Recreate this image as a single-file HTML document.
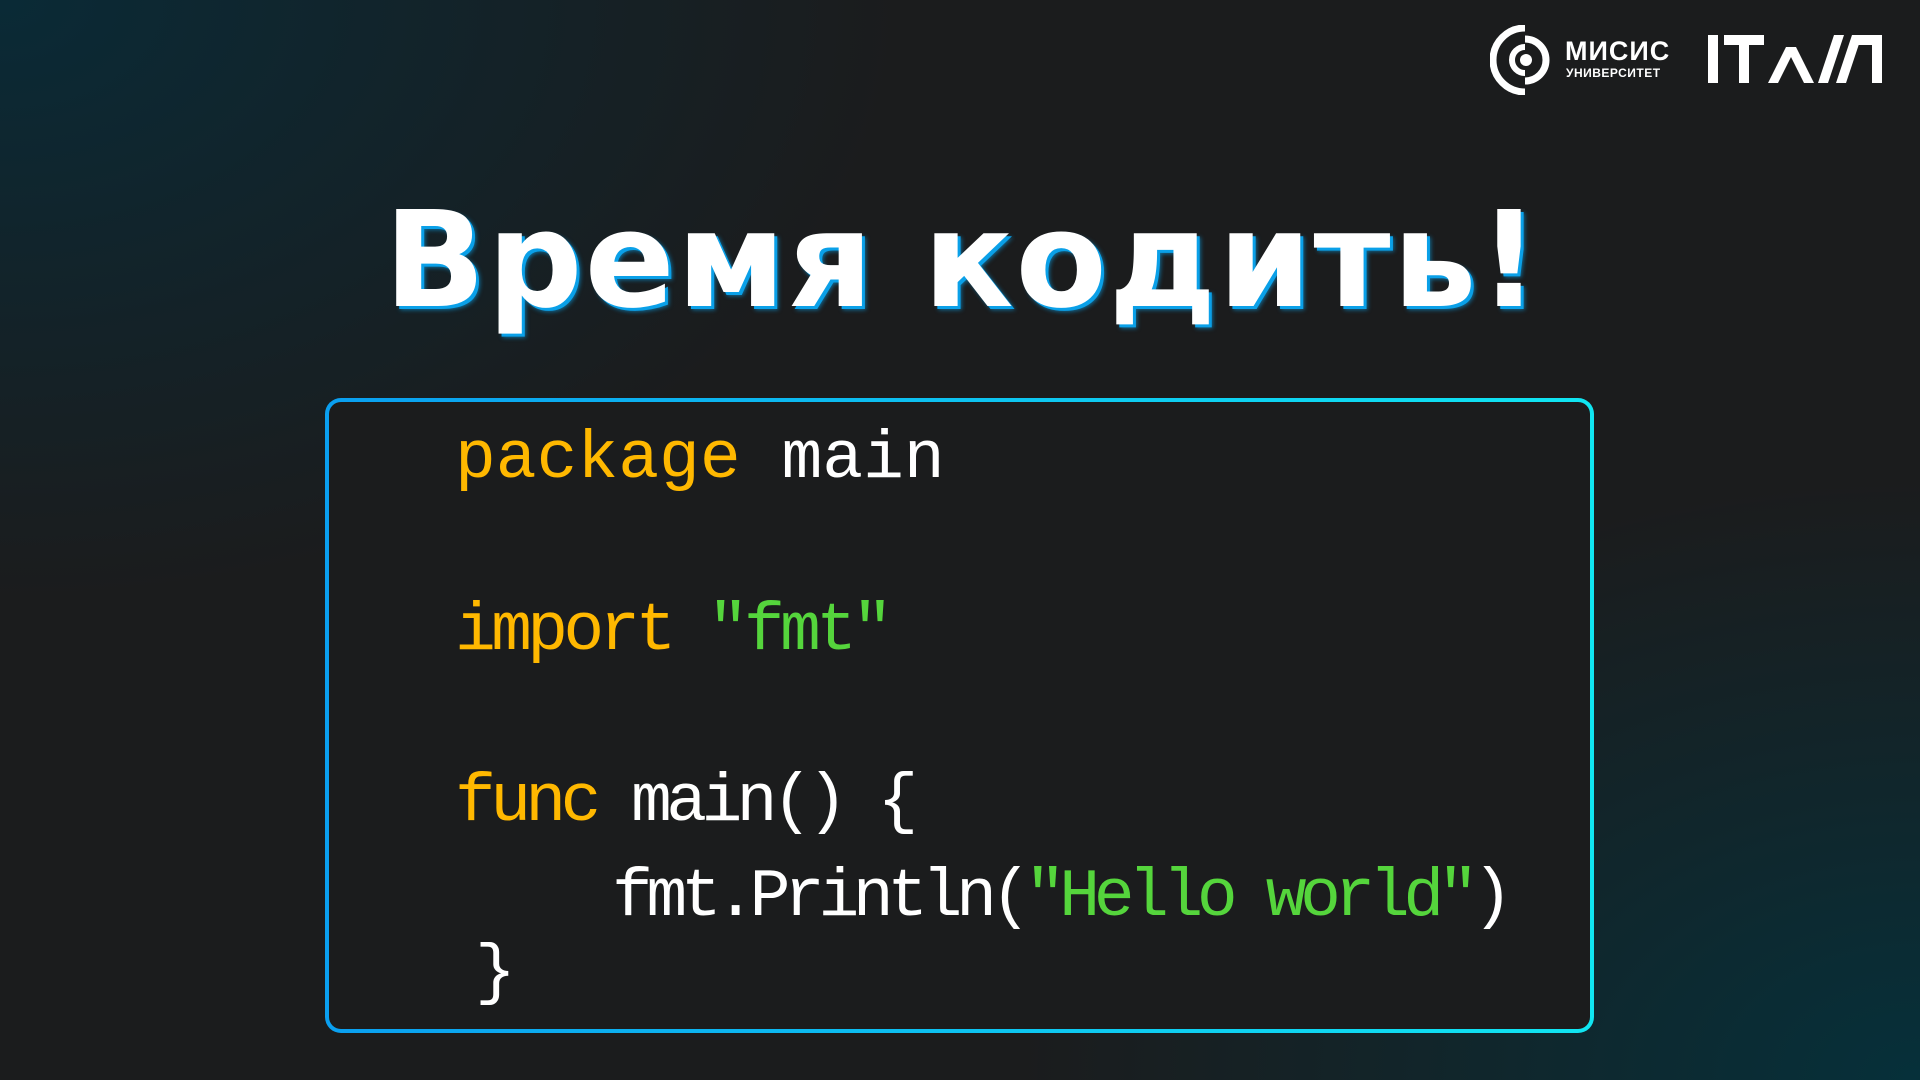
<!DOCTYPE html>
<html><head><meta charset="utf-8"><style>
html,body{margin:0;padding:0}
body{width:1920px;height:1080px;overflow:hidden;position:relative;
background:radial-gradient(ellipse 900px 600px at 0% 0%,#0a2a36 0%,rgba(10,42,54,0) 100%),radial-gradient(ellipse 900px 600px at 100% 100%,#06303a 0%,rgba(6,48,58,0) 100%),#1b1c1d;
font-family:"Liberation Sans",sans-serif}
.title{position:absolute;left:384px;top:195px;width:1150px;font-family:"DejaVu Sans","Liberation Sans",sans-serif;font-weight:bold;font-size:133px;color:#fff;white-space:nowrap;letter-spacing:2px;
text-shadow:3px 3px 0 #0aa0e8,4px 4px 4px rgba(10,160,232,.6);line-height:1}
.box{position:absolute;left:325px;top:398px;width:1269px;height:635px;border-radius:16px;padding:4px;box-sizing:border-box;background:linear-gradient(90deg,#0a9ff0,#10e6f2)}
.inner{width:100%;height:100%;border-radius:12px;background:#1b1c1d}
.code{position:absolute;font-family:"Liberation Mono",monospace;font-size:68px;color:#fff;white-space:pre;line-height:1}
.y{color:#ffb800}.g{color:#55d53c}
</style></head><body>
<div class="title">Время кодить!</div>
<div class="box"><div class="inner"></div></div>
<div class="code" style="left:455px;top:426px"><span class="y">package</span> main</div>
<div class="code" style="left:455px;top:598px;letter-spacing:-4.7px"><span class="y">import</span> <span class="g">"fmt"</span></div>
<div class="code" style="left:455px;top:769px;letter-spacing:-5.6px"><span class="y">func</span> main() {</div>
<div class="code" style="left:612px;top:864px;letter-spacing:-6.4px">fmt.Println(<span class="g">"Hello world"</span>)</div>
<div class="code" style="left:475px;top:940px">}</div>
<svg style="position:absolute;left:1490px;top:25px" width="80" height="70" viewBox="0 0 80 70">
<path d="M35 3 A32 32 0 1 0 35 67" fill="none" stroke="#fff" stroke-width="7"/>
<path d="M35 14 A21 21 0 1 1 35 56" fill="none" stroke="#fff" stroke-width="7"/>
<path d="M35 22 A13 13 0 1 0 35 48" fill="none" stroke="#fff" stroke-width="6"/>
<circle cx="36" cy="35" r="6" fill="#fff"/>
</svg>
<div style="position:absolute;left:1565px;top:38px;color:#fff;font-weight:bold;font-size:27px;line-height:1;letter-spacing:1px">МИСИС</div>
<div style="position:absolute;left:1566px;top:67px;color:#fff;font-weight:bold;font-size:12px;line-height:1;letter-spacing:.5px">УНИВЕРСИТЕТ</div>
<svg style="position:absolute;left:1706px;top:33px" width="180" height="52" viewBox="0 0 180 52">
<rect x="2" y="2" width="10" height="48" fill="#fff"/>
<rect x="18" y="2" width="40" height="10" fill="#fff"/>
<rect x="33" y="2" width="10" height="48" fill="#fff"/>
<polygon points="62,50 80,14 90,14 108,50 98,50 85,24 72,50" fill="#fff"/>
<polygon points="112,50 128,2 138,2 122,50" fill="#fff"/>
<polygon points="130,50 146,2 156,2 140,50" fill="#fff"/>
<rect x="166" y="2" width="10" height="48" fill="#fff"/>
<rect x="146" y="2" width="30" height="10" fill="#fff"/>
</svg>
</body></html>
